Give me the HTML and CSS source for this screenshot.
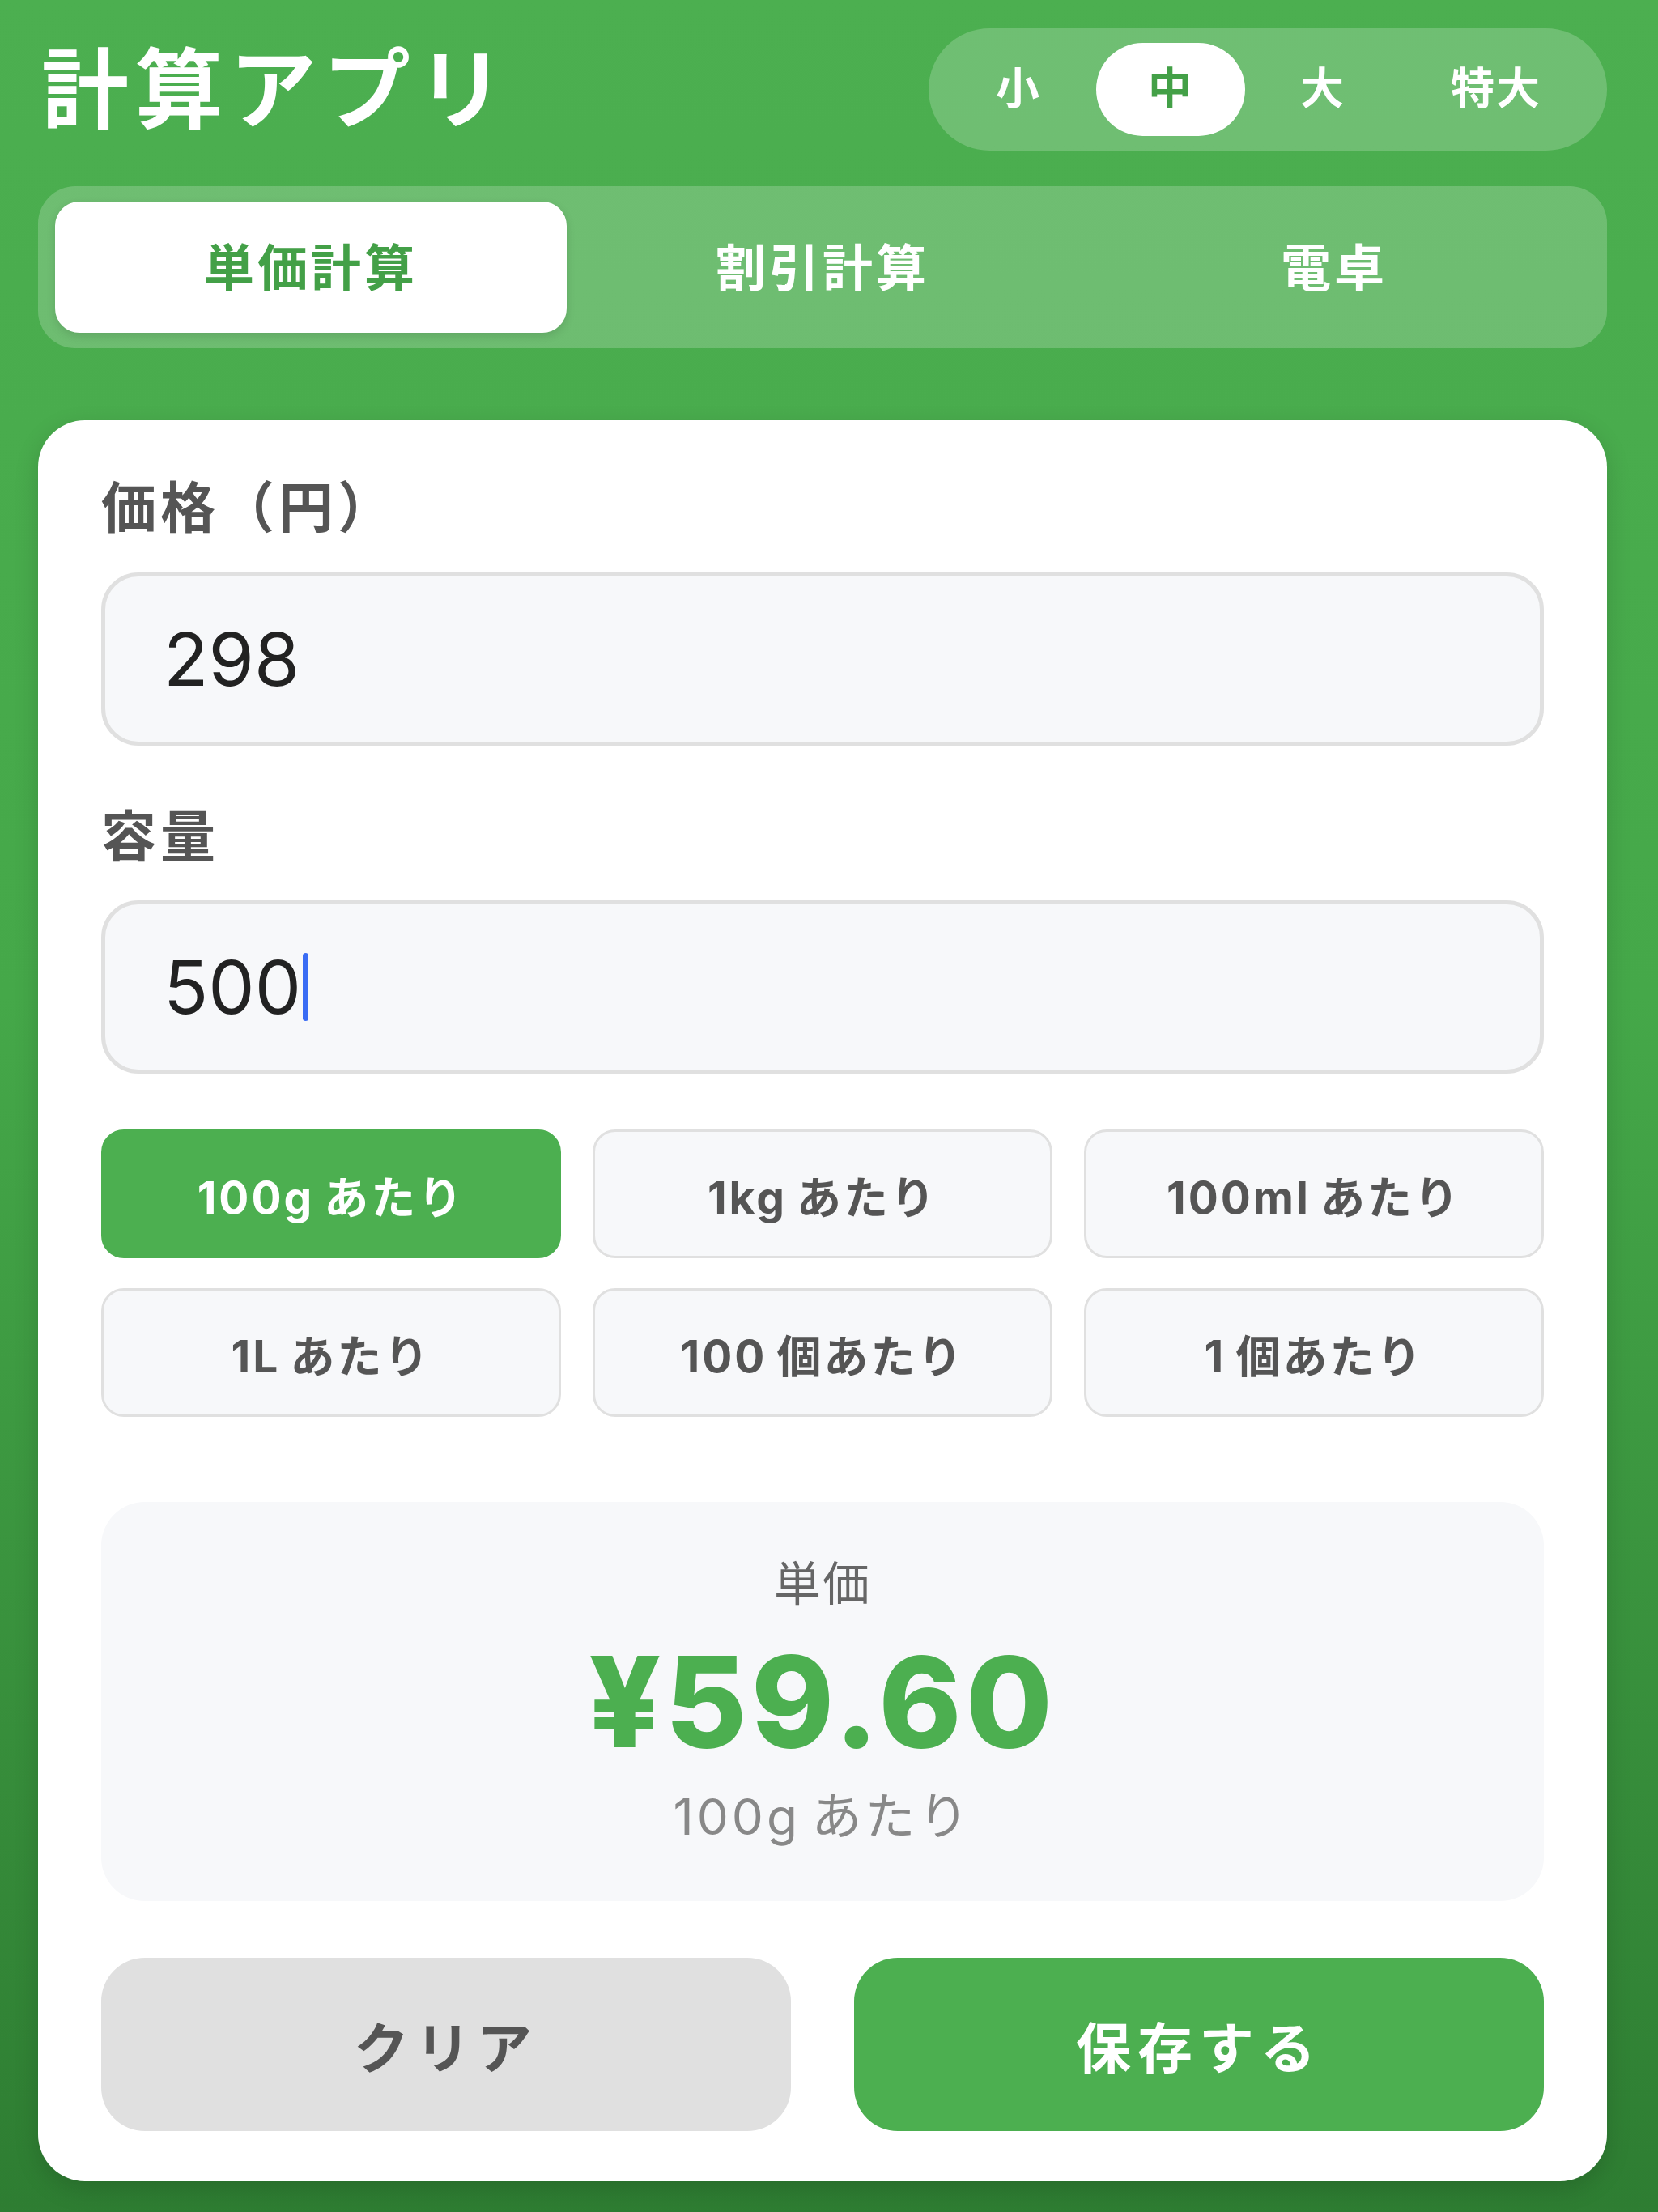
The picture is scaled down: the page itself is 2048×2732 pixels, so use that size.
FILE: index.html
```
<!DOCTYPE html>
<html lang="ja">

<head>
    <meta charset="UTF-8">
    <meta name="viewport" content="width=device-width, initial-scale=1.0">
    <title>計算アプリ</title>
    <link rel="stylesheet" href="styles.css">
</head>

<body>
    <div class="app">
        <header class="app-header">
            <h1 class="app-title">計算アプリ</h1>
            <div class="size-switch">
                <button class="size-btn">小</button>
                <button class="size-btn active">中</button>
                <button class="size-btn">大</button>
                <button class="size-btn">特大</button>
            </div>
        </header>

        <nav class="tabs">
            <button class="tab active">単価計算</button>
            <button class="tab">割引計算</button>
            <button class="tab">電卓</button>
        </nav>

        <main class="card">
            <div class="field">
                <label class="field-label">価格（円）</label>
                <div class="field-input">298</div>
            </div>
            <div class="field">
                <label class="field-label">容量</label>
                <div class="field-input">500<span class="caret"></span></div>
            </div>

            <div class="unit-grid">
                <button class="unit-btn active"><span class="num">100g</span>あたり</button>
                <button class="unit-btn"><span class="num">1kg</span>あたり</button>
                <button class="unit-btn"><span class="num">100ml</span>あたり</button>
                <button class="unit-btn"><span class="num">1L</span>あたり</button>
                <button class="unit-btn"><span class="num">100</span>個あたり</button>
                <button class="unit-btn"><span class="num">1</span>個あたり</button>
            </div>

            <div class="result">
                <div class="result-label">単価</div>
                <div class="result-value">¥59.60</div>
                <div class="result-unit"><span class="num">100g</span>あたり</div>
            </div>

            <div class="actions">
                <button class="btn btn-clear">クリア</button>
                <button class="btn btn-save">保存する</button>
            </div>
        </main>
    </div>
</body>

</html>
```

FILE: styles.css
```
* {
    box-sizing: border-box;
}

body {
    margin: 0;
    min-height: 100vh;
    padding: 35px 63px 0 47px;
    font-family: "Inter", "Noto Sans CJK JP", sans-serif;
    background: linear-gradient(180deg, #4caf50 0%, #45a849 45%, #2e7d32 100%);
    color: #333;
}

button {
    font-family: inherit;
    border: none;
    cursor: pointer;
}

.num {
    margin-right: 0.22em;
}

.app-header {
    display: flex;
    align-items: center;
    justify-content: space-between;
}

.app-title {
    margin: 0 0 0 4px;
    font-size: 108px;
    font-weight: 700;
    line-height: 1.2;
    letter-spacing: 8px;
    color: white;
}

.size-switch {
    display: flex;
    gap: 4px;
    padding: 18px 19px;
    background-color: rgba(255, 255, 255, 0.2);
    border-radius: 76px;
}

.size-btn {
    padding: 25px 0;
    width: 184px;
    font-size: 54px;
    font-weight: 700;
    line-height: 1.2;
    letter-spacing: 2px;
    color: white;
    background: transparent;
    border-radius: 60px;
}

.size-btn:last-child {
    width: 236px;
}

.size-btn.active {
    background-color: white;
    color: #43a047;
}

.tabs {
    display: grid;
    grid-template-columns: repeat(3, 1fr);
    margin-top: 44px;
    padding: 19px 21px;
    background-color: rgba(255, 255, 255, 0.2);
    border-radius: 46px;
}

.tab {
    height: 162px;
    padding-bottom: 6px;
    font-size: 62px;
    font-weight: 700;
    letter-spacing: 4px;
    color: white;
    background: transparent;
    border-radius: 30px;
}

.tab.active {
    background-color: white;
    color: #43a047;
    box-shadow: 0 4px 12px rgba(0, 0, 0, 0.12);
}

.card {
    display: block;
    margin-top: 89px;
    padding: 70px 78px 62px;
    background-color: white;
    border-radius: 58px;
    box-shadow: 0 10px 30px rgba(0, 0, 0, 0.15);
}

.field {
    margin-bottom: 74px;
}

.field + .field {
    margin-bottom: 69px;
}

.field-label {
    display: block;
    margin-bottom: 41px;
    font-size: 68px;
    font-weight: 700;
    line-height: 1.13;
    letter-spacing: 5px;
    color: #555;
}

.field-input {
    display: flex;
    align-items: center;
    height: 214px;
    padding: 0 72px;
    font-size: 91px;
    color: #222;
    background-color: #f7f8fa;
    border: 5px solid #e0e0e0;
    border-radius: 46px;
}

.caret {
    display: inline-block;
    width: 7px;
    height: 84px;
    margin-left: 2px;
    background-color: #3a6cf4;
    border-radius: 4px;
}

.unit-grid {
    display: grid;
    grid-template-columns: repeat(3, 1fr);
    gap: 37px 39px;
}

.unit-btn {
    height: 159px;
    font-size: 55px;
    font-weight: 700;
    letter-spacing: 3px;
    color: #555;
    background-color: #f7f8fa;
    border: 3px solid #e0e0e0;
    border-radius: 28px;
}

.unit-btn.active {
    background-color: #4caf50;
    border-color: #4caf50;
    color: white;
}

.result {
    margin-top: 105px;
    padding: 64px 40px;
    text-align: center;
    background-color: #f7f8fa;
    border-radius: 54px;
}

.result-label {
    font-size: 58px;
    line-height: 1.3;
    letter-spacing: 2px;
    color: #666;
}

.result-value {
    margin-top: 14px;
    font-size: 155px;
    font-weight: 800;
    line-height: 1.2;
    letter-spacing: 5px;
    color: #4caf50;
}

.result-unit {
    margin-top: 9px;
    font-size: 62px;
    line-height: 1.3;
    letter-spacing: 4px;
    color: #888;
}

.actions {
    display: grid;
    grid-template-columns: 1fr 1fr;
    gap: 78px;
    margin-top: 70px;
}

.btn {
    height: 214px;
    font-size: 68px;
    font-weight: 700;
    letter-spacing: 8px;
    border-radius: 54px;
}

.btn-clear {
    background-color: #e0e0e0;
    color: #555;
}

.btn-save {
    background-color: #4caf50;
    color: white;
}
```
